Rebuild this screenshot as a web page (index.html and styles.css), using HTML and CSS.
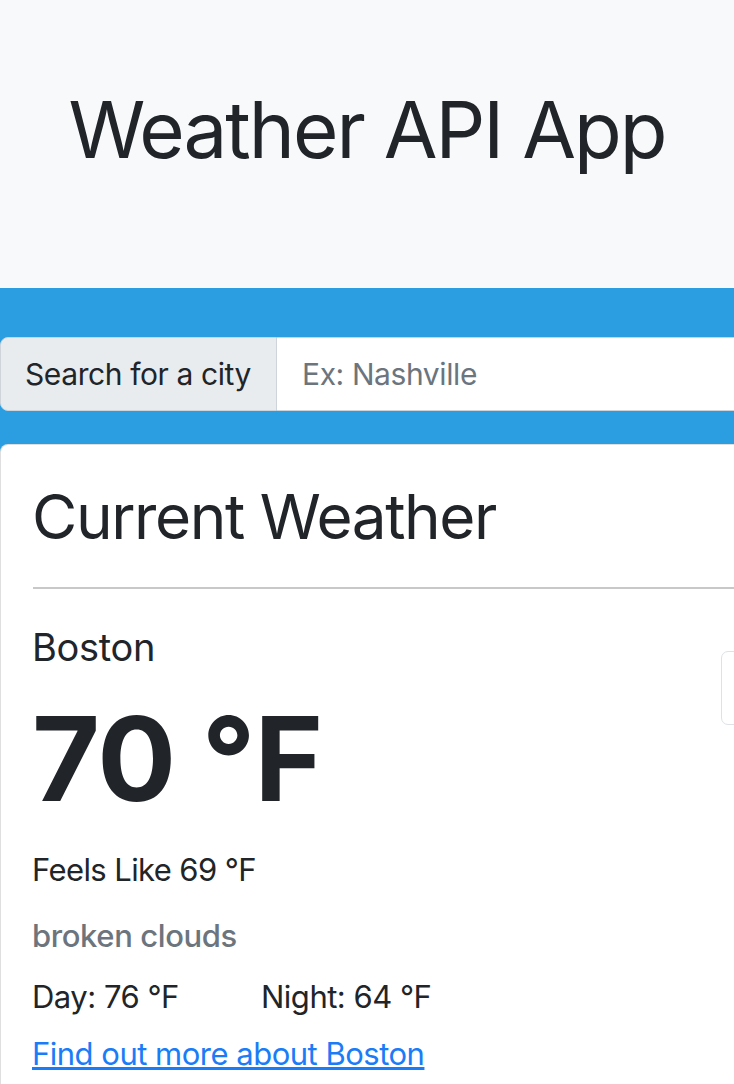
FILE: index.html
```html
<!DOCTYPE html>
<html lang="en">
<head>
<meta charset="utf-8">
<title>Weather API App</title>
<link rel="stylesheet" href="styles.css">
</head>
<body>
<header class="jumbo">
  <h1 class="jumbo-title">Weather API App</h1>
</header>
<main class="band">
  <div class="input-group">
    <span class="input-label">Search for a city</span>
    <input class="input-field" type="text" placeholder="Ex: Nashville">
  </div>
  <section class="card">
    <h2 class="card-title">Current Weather</h2>
    <hr class="divider">
    <div class="row">
      <div class="col-main">
        <h3 class="city">Boston</h3>
        <div class="temp">70 °F</div>
        <p class="feels">Feels Like 69 °F</p>
        <h4 class="desc">broken clouds</h4>
        <p class="daynight"><span class="day">Day: 76 °F</span><span>Night: 64 °F</span></p>
        <a class="more" href="#">Find out more about Boston</a>
      </div>
      <div class="col-side">
        <div class="thumb"></div>
      </div>
    </div>
  </section>
</main>
</body>
</html>
```

FILE: styles.css
```css
html, body {
  margin: 0;
  padding: 0;
  overflow: hidden;
}
body {
  font-family: Inter, "Noto Sans", sans-serif;
  color: #212529;
  background: #fff;
  width: 734px;
}
.jumbo {
  background: #f8f9fa;
  height: 288px;
  box-sizing: border-box;
  padding-top: 83px;
}
.jumbo-title {
  margin: 0;
  font-size: 78px;
  line-height: 94px;
  font-weight: 400;
  letter-spacing: -2px;
  text-align: center;
}
.band {
  background: #2a9ee0;
  padding-top: 49px;
  width: 1100px;
}
.input-group {
  display: flex;
  height: 74px;
  width: 1100px;
}
.input-label {
  box-sizing: border-box;
  width: 277px;
  height: 74px;
  background: #e9ecef;
  border: 1px solid #ced4da;
  border-radius: 8px 0 0 8px;
  font-size: 30px;
  line-height: 72px;
  padding-left: 24px;
  letter-spacing: -0.4px;
  color: #212529;
}
.input-field {
  flex: 1;
  box-sizing: border-box;
  height: 74px;
  border: 1px solid #ced4da;
  border-left: none;
  margin: 0;
  padding: 0 0 0 25px;
  font-family: Inter, "Noto Sans", sans-serif;
  font-size: 30px;
  letter-spacing: -0.4px;
  background: #fff;
  outline: none;
}
.input-field::placeholder {
  color: #6c757d;
}
.card {
  margin-top: 33px;
  background: #fff;
  border: 1px solid rgba(0,0,0,0.125);
  border-radius: 8px;
  padding: 35px 0 60px 32px;
  width: 1000px;
}
.card-title {
  margin: 0 0 0 -1px;
  font-size: 62px;
  line-height: 74px;
  font-weight: 400;
  letter-spacing: -1.4px;
}
.divider {
  margin: 33px 0 0 0;
  border: 0;
  height: 2px;
  background: #c8c8c8;
}
.row {
  display: flex;
  margin-top: 35px;
}
.col-main {
  width: 688px;
}
.col-side {
  flex: 1;
}
.thumb {
  margin-top: 27px;
  width: 120px;
  height: 74px;
  box-sizing: border-box;
  border: 1px solid #dee2e6;
  border-radius: 7px;
}
.city {
  margin: 0 0 0 -1px;
  font-size: 38px;
  line-height: 46px;
  font-weight: 400;
  letter-spacing: -0.3px;
}
.temp {
  margin: 19px 0 0 -1px;
  font-size: 117px;
  line-height: 140px;
  font-weight: 700;
  letter-spacing: -1px;
}
.feels {
  margin: 17px 0 0 -1px;
  font-size: 31px;
  line-height: 48px;
  letter-spacing: -0.6px;
}
.desc {
  margin: 22px 0 0 -1px;
  font-size: 31px;
  line-height: 40px;
  font-weight: 500;
  letter-spacing: -0.4px;
  color: #6c757d;
}
.daynight {
  margin: 17px 0 0 -1px;
  font-size: 31px;
  line-height: 48px;
  letter-spacing: -0.5px;
}
.day {
  display: inline-block;
  width: 229px;
}
.more {
  display: inline-block;
  margin: 9px 0 0 -1px;
  font-size: 31px;
  line-height: 48px;
  letter-spacing: -0.5px;
  color: #1a7cf7;
  text-decoration: underline;
}
```
